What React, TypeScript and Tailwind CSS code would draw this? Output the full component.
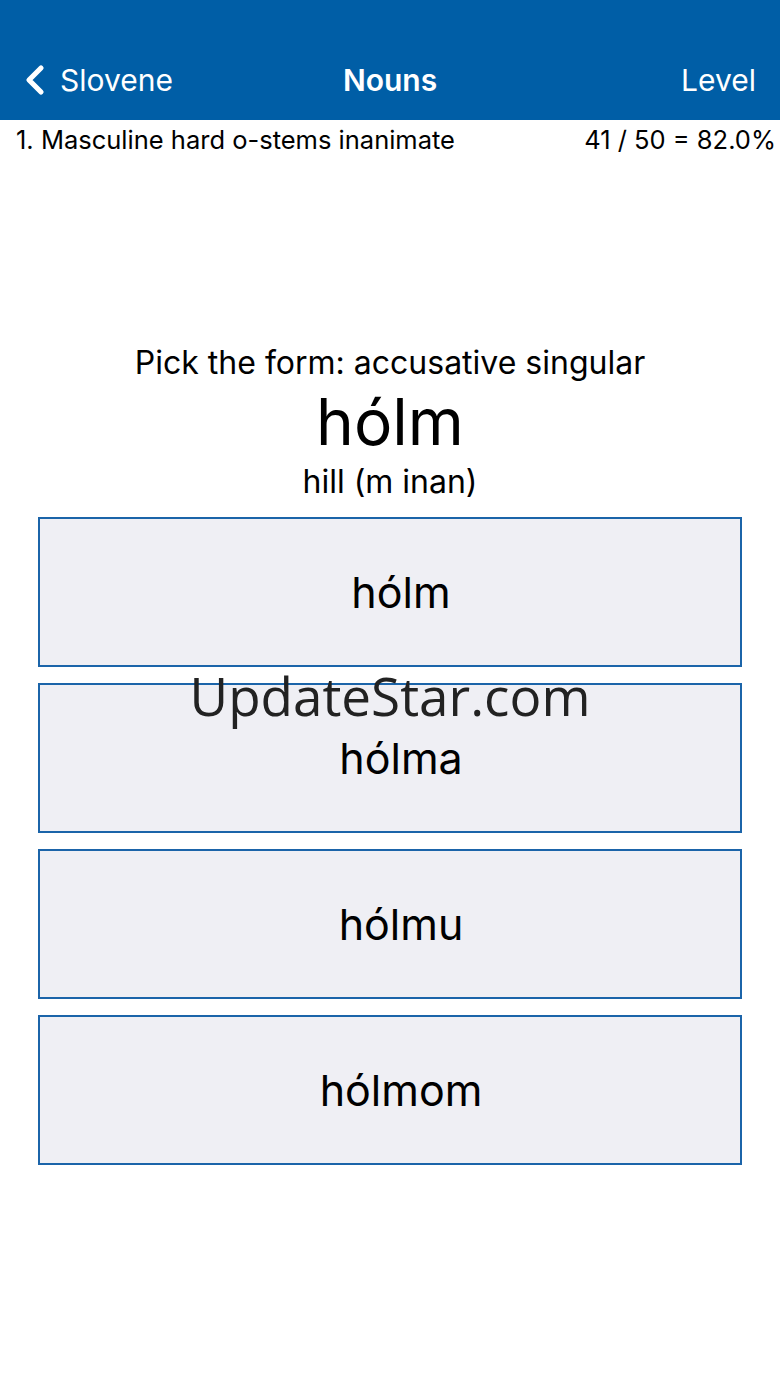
import { ChevronLeft } from "lucide-react";

const options = ["hólm", "hólma", "hólmu", "hólmom"];

export default function App() {
  return (
    <div className="relative min-h-[1387px] w-[780px] bg-white font-['Inter',sans-serif] text-black">
      {/* nav bar */}
      <div className="h-[120px] bg-[#005ea6] pt-[40px] text-white">
        <div className="relative flex h-[80px] items-center justify-between px-[22px]">
          <div className="flex items-center">
            <ChevronLeft className="-ml-[11px] mr-[1px] h-[48px] w-[48px]" strokeWidth={2.6} />
            <span className="text-[30px]">Slovene</span>
          </div>
          <span className="absolute left-1/2 -translate-x-1/2 text-[30px] font-semibold">Nouns</span>
          <span className="pr-[2px] text-[30px]">Level</span>
        </div>
      </div>

      {/* lesson row */}
      <div className="flex h-[40px] items-center justify-between pl-[16px] pr-[4px] text-[25.5px]">
        <span>1. Masculine hard o-stems inanimate</span>
        <span>41 / 50 = 82.0%</span>
      </div>

      {/* prompt */}
      <div className="mt-[184px] flex flex-col items-center">
        <div className="text-[32px] leading-[38px]">Pick the form: accusative singular</div>
        <div className="text-[64px] leading-[80px]">hólm</div>
        <div className="text-[32px] leading-[40px]">hill (m inan)</div>
      </div>

      {/* answers */}
      <div className="mx-[38px] mt-[15px] flex flex-col gap-[16px]">
        {options.map((o) => (
          <button
            key={o}
            className="flex h-[150px] items-center justify-center border-2 border-[#1b64a9] bg-[#efeff4] pl-[22px] text-[43px]"
          >
            {o}
          </button>
        ))}
      </div>

      {/* watermark */}
      <div className="pointer-events-none absolute left-0 right-0 top-[656px] text-center font-['Open_Sans',sans-serif] text-[53px] text-[#222]">
        UpdateStar.com
      </div>
    </div>
  );
}
